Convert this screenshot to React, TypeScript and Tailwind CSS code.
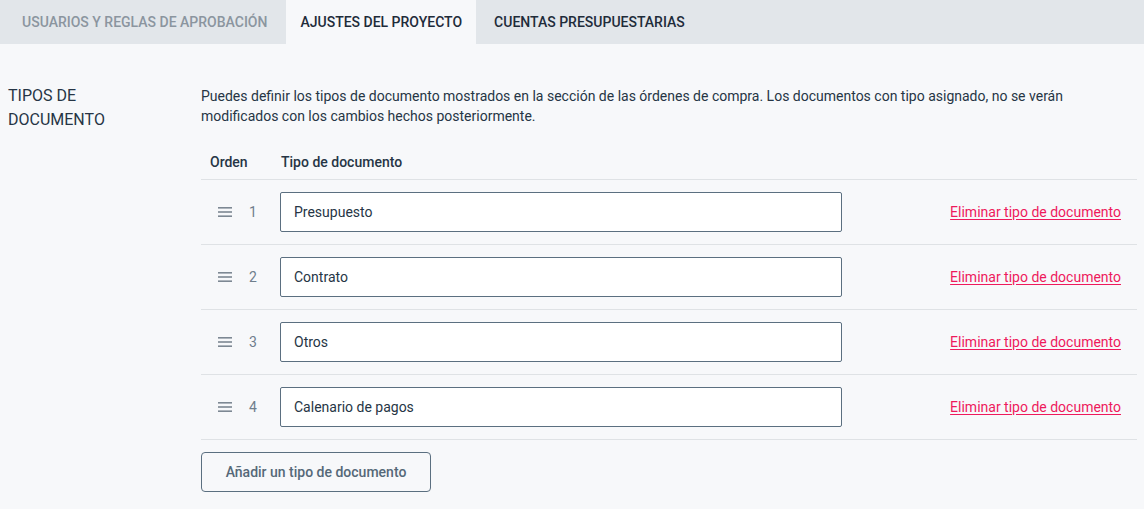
import { useState } from 'react'

const tabs = ['USUARIOS Y REGLAS DE APROBACIÓN', 'AJUSTES DEL PROYECTO', 'CUENTAS PRESUPUESTARIAS']

function DragIcon() {
  return (
    <svg width="14" height="10" viewBox="0 0 14 10" className="text-[#7d8893]">
      <rect x="0" y="0" width="14" height="1.6" fill="currentColor" />
      <rect x="0" y="4.2" width="14" height="1.6" fill="currentColor" />
      <rect x="0" y="8.4" width="14" height="1.6" fill="currentColor" />
    </svg>
  )
}

export default function App() {
  const [types] = useState(['Presupuesto', 'Contrato', 'Otros', 'Calenario de pagos'])

  return (
    <div className="w-[1144px] h-[509px] bg-[#f7f8fa] font-['Roboto',sans-serif] text-[#263545] overflow-hidden">
      {/* Tabs */}
      <div className="flex h-[44px] bg-[#e2e6ea]">
        {tabs.map((t, i) => (
          <div
            key={t}
            className={
              i === 1
                ? 'flex items-center px-[14px] text-[14px] font-medium text-[#1f2c3a] bg-[#f7f8fa]'
                : i === 0
                ? 'flex items-center pl-[22px] pr-[19px] text-[14px] font-medium text-[#8b959f]'
                : 'flex items-center px-[18px] text-[14px] font-medium text-[#1f2c3a]'
            }
          >
            {t}
          </div>
        ))}
      </div>

      <div className="flex pt-[40px]">
        <div className="w-[201px] pl-[8px] text-[16px] leading-[24px] text-[#263545]">
          TIPOS DE
          <br />
          DOCUMENTO
        </div>

        <div className="w-[936px]">
          <p className="text-[14px] leading-[20px] text-[#263545] pt-[2px]">
            Puedes definir los tipos de documento mostrados en la sección de las órdenes de compra. Los documentos con tipo asignado, no se verán modificados con los cambios hechos posteriormente.
          </p>

          <div className="flex items-center h-[34px] mt-[20px] border-b border-[#dfe2e5] text-[14px] font-medium text-[#263545]">
            <span className="w-[80px] pl-[9px]">Orden</span>
            <span>Tipo de documento</span>
          </div>

          {types.map((t, i) => (
            <div key={t} className="flex items-center h-[65px] border-b border-[#dfe2e5]">
              <div className="w-[79px] flex items-center pl-[17px]">
                <DragIcon />
                <span className="ml-[17px] text-[14px] text-[#6f7e8c]">{i + 1}</span>
              </div>
              <input
                readOnly
                value={t}
                className="w-[562px] h-[40px] px-[13px] bg-white border border-[#5b6f80] rounded-[2px] text-[14px] text-[#263545] outline-none"
              />
              <div className="flex-1 flex justify-end pr-[16px]">
                <a href="#" className="text-[14px] text-[#ee1a5c] underline underline-offset-2">
                  Eliminar tipo de documento
                </a>
              </div>
            </div>
          ))}

          <button className="mt-[12px] w-[230px] h-[40px] border border-[#5b6f80] rounded-[4px] text-[14px] font-medium text-[#556878]">
            Añadir un tipo de documento
          </button>
        </div>
      </div>
    </div>
  )
}
